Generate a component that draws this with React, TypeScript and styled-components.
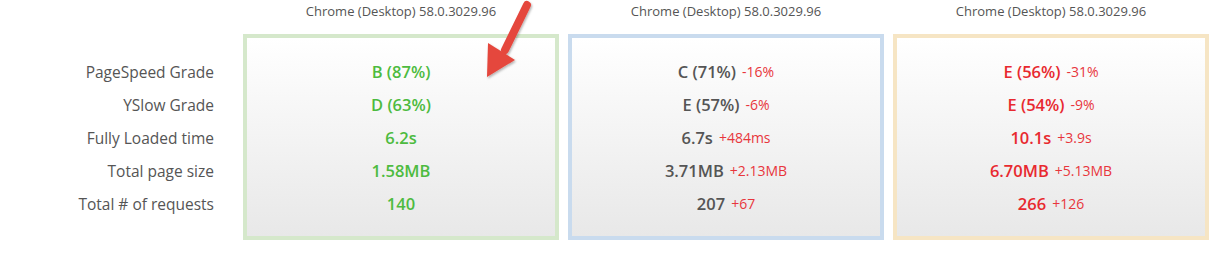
import styled, { createGlobalStyle } from "styled-components";

const GlobalStyle = createGlobalStyle`
  html, body {
    margin: 0;
    padding: 0;
    background: #ffffff;
  }
  body {
    font-family: "Open Sans", "DejaVu Sans", sans-serif;
  }
`;

const Page = styled.div`
  position: relative;
  width: 1225px;
  height: 260px;
  display: flex;
  overflow: hidden;
`;

const LabelCol = styled.div`
  width: 214px;
  margin-right: 29px;
  padding-top: 55px;
  display: flex;
  flex-direction: column;
`;

const Label = styled.div`
  height: 33px;
  display: flex;
  align-items: center;
  justify-content: flex-end;
  font-size: 15.5px;
  color: #555;
  white-space: nowrap;
`;

const Columns = styled.div`
  display: flex;
  gap: 9px;
`;

const Column = styled.div`
  width: 316px;
  display: flex;
  flex-direction: column;
`;

const Header = styled.div`
  height: 34px;
  padding-top: 3px;
  box-sizing: border-box;
  text-align: center;
  font-size: 13px;
  line-height: 16px;
  color: #555;
  white-space: nowrap;
`;

const Box = styled.div<{ $border: string }>`
  height: 206px;
  box-sizing: border-box;
  border: 4px solid ${(p) => p.$border};
  background: linear-gradient(#ffffff, #e8e8e8);
  padding-top: 17px;
  display: flex;
  flex-direction: column;
`;

const Row = styled.div`
  height: 33px;
  display: flex;
  align-items: center;
  justify-content: center;
  gap: 6px;
  white-space: nowrap;
`;

const Value = styled.span<{ $color: string }>`
  font-size: 16.5px;
  font-weight: 600;
  color: ${(p) => p.$color};
`;

const Delta = styled.span`
  font-size: 14px;
  color: #e8363c;
`;

const Arrow = styled.svg`
  position: absolute;
  left: 478px;
  top: 0;
  overflow: visible;
`;

type Cell = { value: string; delta?: string };

const labels = [
  "PageSpeed Grade",
  "YSlow Grade",
  "Fully Loaded time",
  "Total page size",
  "Total # of requests",
];

const columns: { border: string; color: string; cells: Cell[] }[] = [
  {
    border: "#d5e8cb",
    color: "#4dbb3f",
    cells: [
      { value: "B (87%)" },
      { value: "D (63%)" },
      { value: "6.2s" },
      { value: "1.58MB" },
      { value: "140" },
    ],
  },
  {
    border: "#c9dbee",
    color: "#555555",
    cells: [
      { value: "C (71%)", delta: "-16%" },
      { value: "E (57%)", delta: "-6%" },
      { value: "6.7s", delta: "+484ms" },
      { value: "3.71MB", delta: "+2.13MB" },
      { value: "207", delta: "+67" },
    ],
  },
  {
    border: "#f6e5c4",
    color: "#e8292f",
    cells: [
      { value: "E (56%)", delta: "-31%" },
      { value: "E (54%)", delta: "-9%" },
      { value: "10.1s", delta: "+3.9s" },
      { value: "6.70MB", delta: "+5.13MB" },
      { value: "266", delta: "+126" },
    ],
  },
];

export default function App() {
  return (
    <>
      <GlobalStyle />
      <Page>
        <LabelCol>
          {labels.map((l) => (
            <Label key={l}>{l}</Label>
          ))}
        </LabelCol>
        <Columns>
          {columns.map((c, i) => (
            <Column key={i}>
              <Header>Chrome (Desktop) 58.0.3029.96</Header>
              <Box $border={c.border}>
                {c.cells.map((cell, j) => (
                  <Row key={j}>
                    <Value $color={c.color}>{cell.value}</Value>
                    {cell.delta && <Delta>{cell.delta}</Delta>}
                  </Row>
                ))}
              </Box>
            </Column>
          ))}
        </Columns>
        <Arrow width="60" height="85" viewBox="0 0 60 85">
          <defs>
            <filter id="sh" x="-30%" y="-30%" width="160%" height="160%">
              <feDropShadow dx="1" dy="1.5" stdDeviation="1.2" floodColor="#000" floodOpacity="0.3" />
            </filter>
          </defs>
          <g filter="url(#sh)">
            <line x1="49" y1="5" x2="27" y2="50" stroke="#e5473d" strokeWidth="8" strokeLinecap="round" />
            <polygon points="9,77 10,43 37,60" fill="#e5473d" />
          </g>
        </Arrow>
      </Page>
    </>
  );
}
